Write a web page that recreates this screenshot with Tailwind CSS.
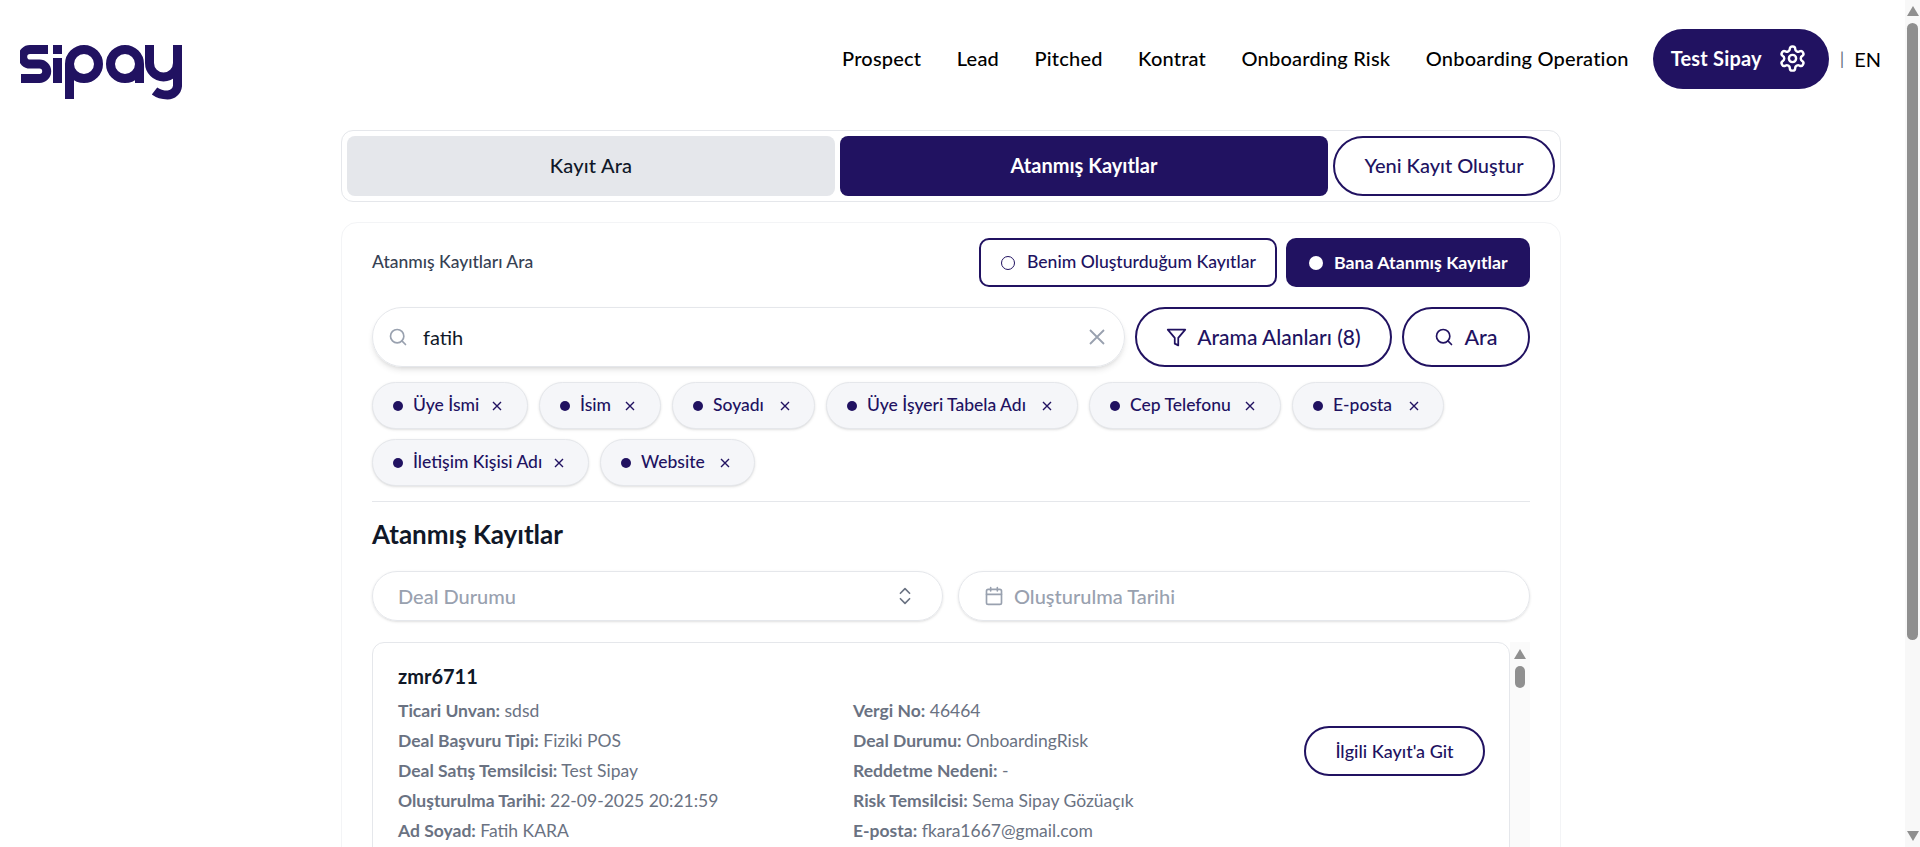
<!doctype html>
<html lang="tr">
<head>
<meta charset="utf-8">
<title>Sipay</title>
<script src="https://cdn.jsdelivr.net/npm/@tailwindcss/browser@4"></script>
</head>
<body class="h-screen overflow-hidden bg-white [font-family:Lato,sans-serif] text-gray-900">
<div class="flex h-[847px]">
  <div class="flex-1 min-w-0 h-full overflow-hidden">
    <header class="flex items-center justify-between h-[118px] pl-5 pr-[24px]">
      <svg class="w-[165px] h-[56px] mt-[28px]" viewBox="20 44 165 56" fill="none" stroke="#211261" stroke-width="9">
        <path d="M48 48.5H30a7.3 7.3 0 0 0 0 14.6h9.5a7.2 7.2 0 0 1 0 14.4H21"/>
        <path d="M53 48.5h9M57.5 57v25" stroke-width="9"/>
        <circle cx="84" cy="63" r="14.5"/><path d="M69.5 63v35"/>
        <circle cx="125" cy="63" r="14.5"/><path d="M139.5 63v19"/>
        <path d="M149.5 44v18a14 14 0 0 0 28 0V44M177.5 60v25a10 10 0 0 1-10 9c-6 0-9-1-13-4"/>
      </svg>
      <nav class="flex items-center mb-[1px]">
        <ul class="flex items-center gap-[35.5px] text-[20px] tracking-[0.01em] font-medium text-black mr-6 mb-[2px]">
          <li>Prospect</li><li>Lead</li><li>Pitched</li><li>Kontrat</li><li>Onboarding Risk</li><li>Onboarding Operation</li>
        </ul>
        <button class="flex items-center justify-between w-[176px] h-[60px] pl-[18px] pr-[22px] rounded-full bg-[#211261] text-white text-[20px] tracking-[0.01em] font-bold">
          <span class="mb-[1px]">Test Sipay</span>
          <svg class="w-[29px] h-[29px]" viewBox="0 0 24 24" fill="none" stroke="currentColor" stroke-width="2" stroke-linecap="round" stroke-linejoin="round"><path d="M12.22 2h-.44a2 2 0 0 0-2 2v.18a2 2 0 0 1-1 1.73l-.43.25a2 2 0 0 1-2 0l-.15-.08a2 2 0 0 0-2.73.73l-.22.38a2 2 0 0 0 .73 2.73l.15.1a2 2 0 0 1 1 1.72v.51a2 2 0 0 1-1 1.74l-.15.09a2 2 0 0 0-.73 2.73l.22.38a2 2 0 0 0 2.73.73l.15-.08a2 2 0 0 1 2 0l.43.25a2 2 0 0 1 1 1.73V20a2 2 0 0 0 2 2h.44a2 2 0 0 0 2-2v-.18a2 2 0 0 1 1-1.73l.43-.25a2 2 0 0 1 2 0l.15.08a2 2 0 0 0 2.73-.73l.22-.39a2 2 0 0 0-.73-2.73l-.15-.08a2 2 0 0 1-1-1.74v-.5a2 2 0 0 1 1-1.74l.15-.09a2 2 0 0 0 .73-2.73l-.22-.38a2 2 0 0 0-2.73-.73l-.15.08a2 2 0 0 1-2 0l-.43-.25a2 2 0 0 1-1-1.73V4a2 2 0 0 0-2-2z"/><circle cx="12" cy="12" r="3"/></svg>
        </button>
        <span class="ml-[11px] text-[18px] text-gray-500">|</span>
        <span class="ml-[10px] text-[20px] text-black">EN</span>
      </nav>
    </header>

    <main class="w-[1220px] ml-[341px] mt-[12px]">
      <div class="flex gap-[5px] h-[72px] p-[5px] border border-gray-200 rounded-xl">
        <button class="w-[488px] pb-[2px] rounded-lg bg-gray-200 text-[20px] tracking-[0.01em] font-medium text-gray-900">Kayıt Ara</button>
        <button class="w-[488px] pb-[2px] rounded-lg bg-[#211261] text-[20px] font-bold text-white">Atanmış Kayıtlar</button>
        <button class="flex-1 pb-[2px] rounded-full border-2 border-[#211261] text-[20px] font-medium text-[#211261]">Yeni Kayıt Oluştur</button>
      </div>

      <section class="mt-[20px] border border-gray-100 rounded-2xl px-[30px] pt-[15px] h-[700px]">
        <div class="flex items-center justify-between">
          <span class="text-[17.5px] text-gray-700 font-medium">Atanmış Kayıtları Ara</span>
          <div class="flex gap-[9px]">
            <button class="flex items-center gap-[12px] h-[49px] w-[298px] pl-[20px] rounded-[10px] border-2 border-[#211261] text-[17.6px] font-medium text-[#211261]">
              <span class="w-[14px] h-[14px] rounded-full border-[1.5px] border-[#211261]"></span>Benim Oluşturduğum Kayıtlar
            </button>
            <button class="flex items-center gap-[11px] h-[49px] w-[244px] pl-[23px] rounded-[10px] bg-[#211261] text-[17.75px] font-bold text-white">
              <span class="w-[14px] h-[14px] rounded-full bg-white"></span>Bana Atanmış Kayıtlar
            </button>
          </div>
        </div>

        <div class="flex gap-[10px] mt-[20px]">
          <div class="flex items-center w-[753px] h-[60px] pl-[15px] pr-[17px] rounded-full border border-gray-200 shadow-md">
            <svg class="w-[20px] h-[20px] text-gray-400" viewBox="0 0 24 24" fill="none" stroke="currentColor" stroke-width="2" stroke-linecap="round"><circle cx="11" cy="11" r="8"/><path d="m21 21-4.3-4.3"/></svg>
            <span class="ml-[15px] flex-1 text-[20px] text-gray-900">fatih</span>
            <svg class="w-[20px] h-[20px] text-gray-400" viewBox="0 0 20 20" fill="none" stroke="currentColor" stroke-width="1.8"><path d="M3 3l14 14M17 3 3 17"/></svg>
          </div>
          <button class="flex items-center justify-center gap-[10px] w-[257px] h-[60px] rounded-full border-2 border-[#211261] text-[21px] font-medium text-[#211261]">
            <svg class="w-[21px] h-[21px]" viewBox="0 0 24 24" fill="none" stroke="currentColor" stroke-width="2" stroke-linejoin="round"><path d="M22 3H2l8 9.46V19l4 2v-8.54z"/></svg>Arama Alanları (8)
          </button>
          <button class="flex items-center justify-center gap-[10px] w-[128px] h-[60px] rounded-full border-2 border-[#211261] text-[21.5px] font-medium text-[#211261]">
            <svg class="w-[20px] h-[20px]" viewBox="0 0 24 24" fill="none" stroke="currentColor" stroke-width="2" stroke-linecap="round"><circle cx="11" cy="11" r="8"/><path d="m21 21-4.3-4.3"/></svg>Ara
          </button>
        </div>

        <ul class="flex flex-wrap gap-x-[11px] gap-y-[10px] mt-[15px] text-[17.5px] font-medium text-[#211261]">
          <li class="flex items-center h-[47px] w-[156px] pl-[20px] rounded-full border border-gray-200 bg-[#f5f6f9] shadow"><span class="w-[10px] h-[10px] rounded-full bg-[#211261]"></span><span class="ml-[10px] w-[79px]">Üye İsmi</span><svg class="w-[10px] h-[10px]" viewBox="0 0 10 10" stroke="currentColor" stroke-width="1.4"><path d="M1 1l8 8M9 1 1 9"/></svg></li>
          <li class="flex items-center h-[47px] w-[122px] pl-[20px] rounded-full border border-gray-200 bg-[#f5f6f9] shadow"><span class="w-[10px] h-[10px] rounded-full bg-[#211261]"></span><span class="ml-[10px] w-[45px]">İsim</span><svg class="w-[10px] h-[10px]" viewBox="0 0 10 10" stroke="currentColor" stroke-width="1.4"><path d="M1 1l8 8M9 1 1 9"/></svg></li>
          <li class="flex items-center h-[47px] w-[143px] pl-[20px] rounded-full border border-gray-200 bg-[#f5f6f9] shadow"><span class="w-[10px] h-[10px] rounded-full bg-[#211261]"></span><span class="ml-[10px] w-[67px]">Soyadı</span><svg class="w-[10px] h-[10px]" viewBox="0 0 10 10" stroke="currentColor" stroke-width="1.4"><path d="M1 1l8 8M9 1 1 9"/></svg></li>
          <li class="flex items-center h-[47px] w-[252px] pl-[20px] rounded-full border border-gray-200 bg-[#f5f6f9] shadow"><span class="w-[10px] h-[10px] rounded-full bg-[#211261]"></span><span class="ml-[10px] w-[175px]">Üye İşyeri Tabela Adı</span><svg class="w-[10px] h-[10px]" viewBox="0 0 10 10" stroke="currentColor" stroke-width="1.4"><path d="M1 1l8 8M9 1 1 9"/></svg></li>
          <li class="flex items-center h-[47px] w-[192px] pl-[20px] rounded-full border border-gray-200 bg-[#f5f6f9] shadow"><span class="w-[10px] h-[10px] rounded-full bg-[#211261]"></span><span class="ml-[10px] w-[115px]">Cep Telefonu</span><svg class="w-[10px] h-[10px]" viewBox="0 0 10 10" stroke="currentColor" stroke-width="1.4"><path d="M1 1l8 8M9 1 1 9"/></svg></li>
          <li class="flex items-center h-[47px] w-[152px] pl-[20px] rounded-full border border-gray-200 bg-[#f5f6f9] shadow"><span class="w-[10px] h-[10px] rounded-full bg-[#211261]"></span><span class="ml-[10px] w-[76px]">E-posta</span><svg class="w-[10px] h-[10px]" viewBox="0 0 10 10" stroke="currentColor" stroke-width="1.4"><path d="M1 1l8 8M9 1 1 9"/></svg></li>
          <li class="flex items-center h-[47px] w-[217px] pl-[20px] rounded-full border border-gray-200 bg-[#f5f6f9] shadow"><span class="w-[10px] h-[10px] rounded-full bg-[#211261]"></span><span class="ml-[10px] w-[141px]">İletişim Kişisi Adı</span><svg class="w-[10px] h-[10px]" viewBox="0 0 10 10" stroke="currentColor" stroke-width="1.4"><path d="M1 1l8 8M9 1 1 9"/></svg></li>
          <li class="flex items-center h-[47px] w-[155px] pl-[20px] rounded-full border border-gray-200 bg-[#f5f6f9] shadow"><span class="w-[10px] h-[10px] rounded-full bg-[#211261]"></span><span class="ml-[10px] w-[79px]">Website</span><svg class="w-[10px] h-[10px]" viewBox="0 0 10 10" stroke="currentColor" stroke-width="1.4"><path d="M1 1l8 8M9 1 1 9"/></svg></li>
        </ul>

        <hr class="mt-[15px] border-gray-200">
        <h2 class="mt-[14px] text-[26px] leading-[36px] font-bold text-gray-900">Atanmış Kayıtlar</h2>

        <div class="flex gap-[15px] mt-[19px]">
          <div class="flex items-center justify-between w-[571px] h-[50px] pl-[25px] pr-[26px] rounded-full border border-gray-200 shadow text-[20px] text-gray-400 font-medium">
            <span>Deal Durumu</span>
            <svg class="w-[22px] h-[22px] text-gray-500" viewBox="0 0 24 24" fill="none" stroke="currentColor" stroke-width="1.8" stroke-linecap="round" stroke-linejoin="round"><path d="m7 15 5 5 5-5M7 9l5-5 5 5"/></svg>
          </div>
          <div class="flex items-center w-[572px] h-[50px] pl-[25px] rounded-full border border-gray-200 shadow text-[20px] text-gray-400 font-medium">
            <svg class="w-[20px] h-[20px] mr-[10px] text-gray-400" viewBox="0 0 24 24" fill="none" stroke="currentColor" stroke-width="2" stroke-linecap="round"><path d="M8 2v4M16 2v4"/><rect x="3" y="4" width="18" height="18" rx="2"/><path d="M3 10h18"/></svg>
            <span>Oluşturulma Tarihi</span>
          </div>
        </div>

        <div class="flex mt-[21px]">
          <article class="flex w-[1138px] h-[400px] pl-[25px] pr-[24px] pt-[18px] rounded-t-xl border border-gray-200">
            <div class="w-[455px]">
              <h3 class="text-[20px] leading-[30px] font-bold text-gray-900">zmr6711</h3>
              <div class="mt-[5px] text-[17.5px] leading-[30px] text-gray-500">
                <p><b class="font-bold">Ticari Unvan:</b> sdsd</p>
                <p><b class="font-bold">Deal Başvuru Tipi:</b> Fiziki POS</p>
                <p><b class="font-bold">Deal Satış Temsilcisi:</b> Test Sipay</p>
                <p><b class="font-bold">Oluşturulma Tarihi:</b> 22-09-2025 20:21:59</p>
                <p><b class="font-bold">Ad Soyad:</b> Fatih KARA</p>
              </div>
            </div>
            <div class="w-[451px] pt-[35px] text-[17.5px] leading-[30px] text-gray-500">
              <p><b class="font-bold">Vergi No:</b> 46464</p>
              <p><b class="font-bold">Deal Durumu:</b> OnboardingRisk</p>
              <p><b class="font-bold">Reddetme Nedeni:</b> -</p>
              <p><b class="font-bold">Risk Temsilcisi:</b> Sema Sipay Gözüaçık</p>
              <p><b class="font-bold">E-posta:</b> fkara1667@gmail.com</p>
            </div>
            <div class="pt-[65px]">
              <button class="w-[181px] h-[50px] rounded-full border-2 border-[#211261] text-[18px] font-medium text-[#211261]">İlgili Kayıt'a Git</button>
            </div>
          </article>
          <div class="w-[20px] h-[400px] bg-[#fafafa] flex flex-col items-center pt-[7px]">
            <svg class="w-[12px] h-[10px]" viewBox="0 0 12 10"><path d="M6 0l6 10H0z" fill="#8f8f8f"/></svg>
            <div class="w-[10px] h-[22px] mt-[7px] rounded-full bg-[#8f8f8f]"></div>
          </div>
        </div>
      </section>
    </main>
  </div>

  <aside class="w-[15px] h-full bg-[#f8f8f8] flex flex-col items-center justify-between pt-[6px] pb-[6px]">
    <div class="flex flex-col items-center">
      <svg class="w-[12px] h-[10px]" viewBox="0 0 12 10"><path d="M6 0l6 10H0z" fill="#8f8f8f"/></svg>
      <div class="w-[11px] h-[617px] mt-[7px] rounded-full bg-[#8f8f8f]"></div>
    </div>
    <svg class="w-[12px] h-[10px]" viewBox="0 0 12 10"><path d="M0 0h12L6 10z" fill="#8f8f8f"/></svg>
  </aside>
</div>
</body>
</html>
